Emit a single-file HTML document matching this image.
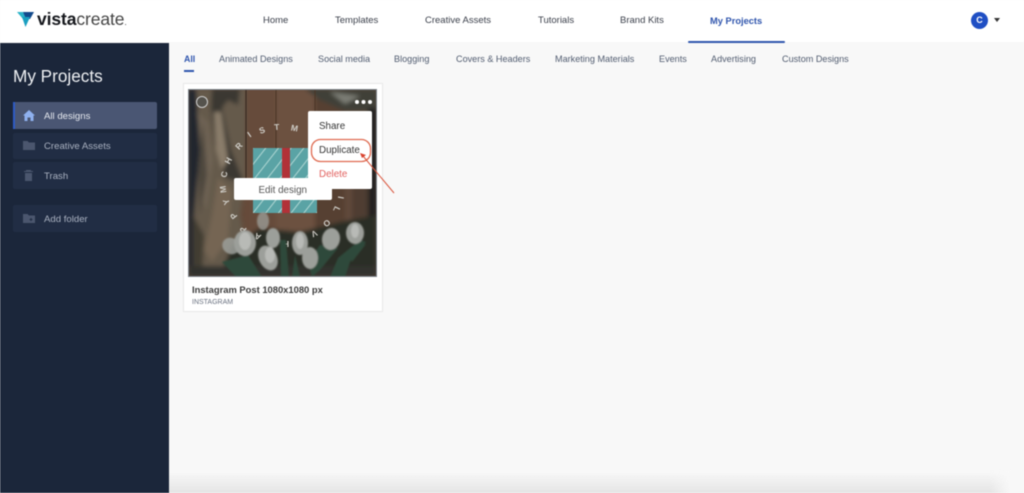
<!DOCTYPE html>
<html><head><meta charset="utf-8"><style>
html,body{margin:0;padding:0}
body{width:1024px;height:493px;overflow:hidden;position:relative;background:#f8f8f8;font-family:"Liberation Sans",sans-serif;color:#333}
.a{position:absolute;white-space:nowrap}
.blur{position:absolute;left:0;top:0;width:1024px;height:493px;filter:blur(.4px)}
.n{top:14px;font-size:9.5px;line-height:12px;color:#3a3f4a}
.t{top:53px;font-size:9.100px;line-height:12px;color:#515c70}
.s{left:13px;width:144px;border-radius:2px;background:#212d44}
.l{left:44px;font-size:9.600px;line-height:12px;color:#a9b1c0}
.m{left:319px;font-size:9.800px;line-height:12px;color:#333}
</style></head><body><div class="blur">
<div class="a" style="left:0;top:0;width:1024px;height:42px;background:#fff"></div>
<svg class="a" style="left:17px;top:12px" width="18" height="16" viewBox="0 0 18 16"><path d="M0 0H6L9 6 6 7Z" fill="#2bb3c9"/><path d="M6 0H17L13 7H9Z" fill="#124a8c"/><path d="M5 5H13L8.5 15Z" fill="#1a9fc0"/></svg>
<div class="a" style="left:37px;top:9px;font-size:17.500px;line-height:20px;color:#15171c;letter-spacing:-.1px"><b>vista</b><span style="color:#444">create</span><span style="font-size:8px">.</span></div>
<div class="a n" style="left:263px;top:14.500px">Home</div>
<div class="a n" style="left:335px;top:14.500px">Templates</div>
<div class="a n" style="left:425px;top:14.500px">Creative Assets</div>
<div class="a n" style="left:538px;top:14.500px">Tutorials</div>
<div class="a n" style="left:620px;top:14.500px">Brand Kits</div>
<div class="a n" style="left:710px;top:14.500px;color:#2f55ad;font-weight:bold;font-size:9.300px">My Projects</div>
<div class="a" style="left:688px;top:41px;width:97px;height:2px;background:#2f55ad;border-radius:1px"></div>
<div class="a" style="left:971px;top:11.500px;width:17px;height:17px;border-radius:50%;background:#1f4fc4;color:#fff;font-size:9px;font-weight:bold;line-height:17px;text-align:center">C</div>
<div class="a" style="left:994px;top:18px;border-left:3px solid transparent;border-right:3px solid transparent;border-top:4px solid #333"></div>

<div class="a" style="left:0;top:43px;width:169px;height:450px;background:#1b263a"></div>
<div class="a" style="left:13px;top:65px;font-size:17.200px;line-height:22px;color:#eef0f3">My Projects</div>
<div class="a s" style="top:102px;height:27px;background:#4a5673"></div>
<div class="a" style="left:13px;top:102px;width:2px;height:27px;background:#2f5cc6"></div>
<div class="a s" style="top:133px;height:26px"></div>
<div class="a s" style="top:162px;height:27px"></div>
<div class="a s" style="top:205px;height:27px"></div>
<svg class="a" style="left:22px;top:109px" width="14" height="13" viewBox="0 0 14 13"><path d="M7 1 13 6.5H11.5V12H8.5V8.5H5.5V12H2.5V6.5H1Z" fill="#8fb1ef"/></svg>
<svg class="a" style="left:22px;top:139px" width="14" height="12" viewBox="0 0 14 12"><path d="M1 2H5.5L7 3.5H13V11H1Z" fill="#4b566e"/></svg>
<svg class="a" style="left:23px;top:168px" width="11" height="14" viewBox="0 0 11 14"><path d="M3 2H8V3H10V4H1V3H3ZM2 5H9V13H2Z" fill="#4b566e"/></svg>
<svg class="a" style="left:22px;top:212px" width="14" height="12" viewBox="0 0 14 12"><path d="M1 2H5.5L7 3.5H13V11H1Z" fill="#4b566e"/><path d="M9 6V9M7.5 7.500H10.500" stroke="#212d44"/></svg>
<div class="a l" style="top:110.500px;color:#e6e9ef">All designs</div>
<div class="a l" style="top:140.500px">Creative Assets</div>
<div class="a l" style="top:170.500px">Trash</div>
<div class="a l" style="top:213.500px">Add folder</div>

<div class="a t" style="left:184px;color:#2f55ad;font-weight:bold;font-size:8.800px">All</div>
<div class="a" style="left:184px;top:70px;width:10px;height:2px;background:#2f55ad"></div>
<div class="a t" style="left:219px">Animated Designs</div>
<div class="a t" style="left:318px">Social media</div>
<div class="a t" style="left:394px">Blogging</div>
<div class="a t" style="left:456px">Covers &amp; Headers</div>
<div class="a t" style="left:555px">Marketing Materials</div>
<div class="a t" style="left:659px">Events</div>
<div class="a t" style="left:711px">Advertising</div>
<div class="a t" style="left:782px">Custom Designs</div>

<div class="a" style="left:183px;top:83px;width:198px;height:227px;background:#fff;border:1px solid #e8e8e8"></div>
<svg class="a" style="left:188px;top:89px" width="189" height="188" viewBox="188 89 189 188">
<defs><filter id="b"><feGaussianBlur stdDeviation="2"/></filter><filter id="c"><feGaussianBlur stdDeviation=".7"/></filter>
<pattern id="st" width="10" height="10" patternUnits="userSpaceOnUse" patternTransform="rotate(38)"><rect width="10" height="10" fill="#5aa3a5"/><rect width="1.100" height="10" fill="#a9d3d0"/></pattern></defs>
<rect x="188" y="89" width="189" height="188" fill="#644a3a"/>
<g filter="url(#b)">
<rect x="246" y="89" width="30" height="150" fill="#664b3b"/>
<rect x="276" y="89" width="39" height="150" fill="#6c5140"/>
<rect x="315" y="89" width="30" height="150" fill="#574133"/>
<rect x="345" y="120" width="23" height="120" fill="#604a3b"/>
<path d="M193 89H246V175L240 215 252 277H193Z" fill="#655a4b"/>
<path d="M188 89H196L200 150 194 215 198 277H188Z" fill="#24282e"/>
<path d="M212 89H240L238 105 228 100 222 108 231 150 244 183 226 178 215 145 211 108Z" fill="#3b3731" />
<path d="M197 112 208 122 213 160 206 210 199 190 201 140Z" fill="#6f6455"/>
<path d="M214 112 221 112 228 160 222 170 216 150Z" fill="#8a7d6a"/>
<path d="M203 120 207 175 200 215 198 170Z" fill="#4d463c"/>
<path d="M218 178 232 190 228 240 212 262 204 250 212 215Z" fill="#746552"/>
<path d="M193 215 204 235 202 277H193Z" fill="#433c33"/>
<path d="M305 89H377V111H345L320 100Z" fill="#3f4039"/>
<path d="M330 92 345 104 360 96Z" fill="#7b7d74"/>
<path d="M368 108H377V277H368Z" fill="#242020"/>
<path d="M352 118H368V225H352Z" fill="#503e32"/>
<path d="M220 277 232 245 260 228 300 232 340 222 377 215V277Z" fill="#2b2e27"/>
<rect x="188" y="266" width="189" height="11" fill="#33332e"/>
</g>
<path d="M246 89V200" stroke="#3a2a20" stroke-width="1.200"/>
<path d="M276 89V148M315 89V111" stroke="#4b3526" stroke-width="1"/>
<rect x="253" y="148" width="64" height="65" fill="url(#st)"/>
<rect x="282" y="148" width="8" height="65" fill="#b13238"/>
<g fill="#cfcdc7" font-family="Liberation Sans" font-size="8.500" font-weight="bold" text-anchor="middle">
<text transform="translate(227 175) rotate(-78)">C</text><text transform="translate(231 162) rotate(-62)">H</text><text transform="translate(241 148) rotate(-48)">R</text><text transform="translate(251 137) rotate(-35)">I</text><text transform="translate(263 133) rotate(-20)">S</text><text transform="translate(277 130) rotate(-4)">T</text><text transform="translate(294 131) rotate(10)">M</text>
<text transform="translate(226 189) rotate(-98)">M</text><text transform="translate(229 201) rotate(-110)">Y</text><text transform="translate(236 214) rotate(-128)">P</text><text transform="translate(245 227) rotate(-140)">P</text><text transform="translate(259 234) rotate(-155)">A</text><text transform="translate(286 241) rotate(180)">H</text><text transform="translate(313 231) rotate(-205)">V</text><text transform="translate(325 221) rotate(-220)">O</text><text transform="translate(334 208) rotate(115)">L</text><text transform="translate(338 197) rotate(100)">I</text>
</g>
<g filter="url(#c)">
<path d="M222 262 248 255 262 277H236ZM330 277 338 258 360 240 366 242 350 262 345 277ZM280 240H286L289 277H281ZM295 255 300 277H292ZM320 245 338 248 320 270 312 277 308 262ZM350 250 366 244 352 262Z" fill="#2f4a3a"/>
<g fill="#9c9f9a">
<ellipse cx="263" cy="221" rx="6" ry="9" opacity=".75"/>
<ellipse cx="231" cy="246" rx="9" ry="8" transform="rotate(30 231 246)" opacity=".85"/>
<ellipse cx="273" cy="238" rx="7" ry="10"/>
<ellipse cx="268" cy="258" rx="9" ry="13" transform="rotate(-25 268 258)"/>
<ellipse cx="300" cy="243" rx="8" ry="12"/>
<ellipse cx="310" cy="258" rx="8" ry="11"/>
<ellipse cx="331" cy="239" rx="9" ry="11" transform="rotate(10 331 239)"/>
<ellipse cx="355" cy="233" rx="9" ry="11"/>
<ellipse cx="245" cy="243" rx="11" ry="13"/>
</g>
<g fill="#b8bab6"><ellipse cx="245" cy="241" rx="6" ry="9"/><ellipse cx="270" cy="255" rx="5" ry="8"/><ellipse cx="355" cy="231" rx="4" ry="7"/><ellipse cx="300" cy="241" rx="4" ry="8"/></g>
</g>
<circle cx="202" cy="102" r="5.500" fill="#55534d" stroke="#d0d0d0" stroke-width="1"/>
<circle cx="357" cy="102" r="2" fill="#fff"/><circle cx="363.500" cy="102" r="2" fill="#fff"/><circle cx="370" cy="102" r="2" fill="#fff"/>
<rect x="188.500" y="89.500" width="188" height="187" fill="none" stroke="#7e858c"/>
</svg>
<div class="a" style="left:234px;top:178px;width:98px;height:22px;background:#fff;border-radius:2px;color:#555;font-size:9.800px;line-height:25px;text-indent:24.500px">Edit design</div>
<div class="a" style="left:308px;top:111px;width:64px;height:78px;background:#fff;border-radius:2px"></div>
<div class="a m" style="top:121px">Share</div>
<div class="a m" style="top:145px">Duplicate</div>
<div class="a m" style="top:169px;color:#e2615e">Delete</div>
<svg class="a" style="left:0;top:0" width="1024" height="493"><rect x="311.500" y="139.500" width="59" height="22" rx="9" fill="none" stroke="#df6a50" stroke-width="1.300"/><path d="M394 193 363 156" stroke="#d9573f" stroke-width="1" fill="none"/><path d="M360 153 366 155 362 158Z" fill="#d9432f"/></svg>
<div class="a" style="left:192px;top:283.500px;font-size:9.400px;line-height:12px;font-weight:bold;color:#3c3c3c">Instagram Post 1080x1080 px</div>
<div class="a" style="left:192px;top:297.500px;font-size:7px;line-height:10px;color:#6a7280">INSTAGRAM</div>
<div class="a" style="left:169px;top:472px;width:855px;height:21px;background:linear-gradient(#f8f8f800,#e4e4e4)"></div>
<div class="a" style="left:990px;top:470px;width:34px;height:23px;background:linear-gradient(90deg,#f8f8f800,#f8f8f8 60%)"></div>
</div></body></html>
